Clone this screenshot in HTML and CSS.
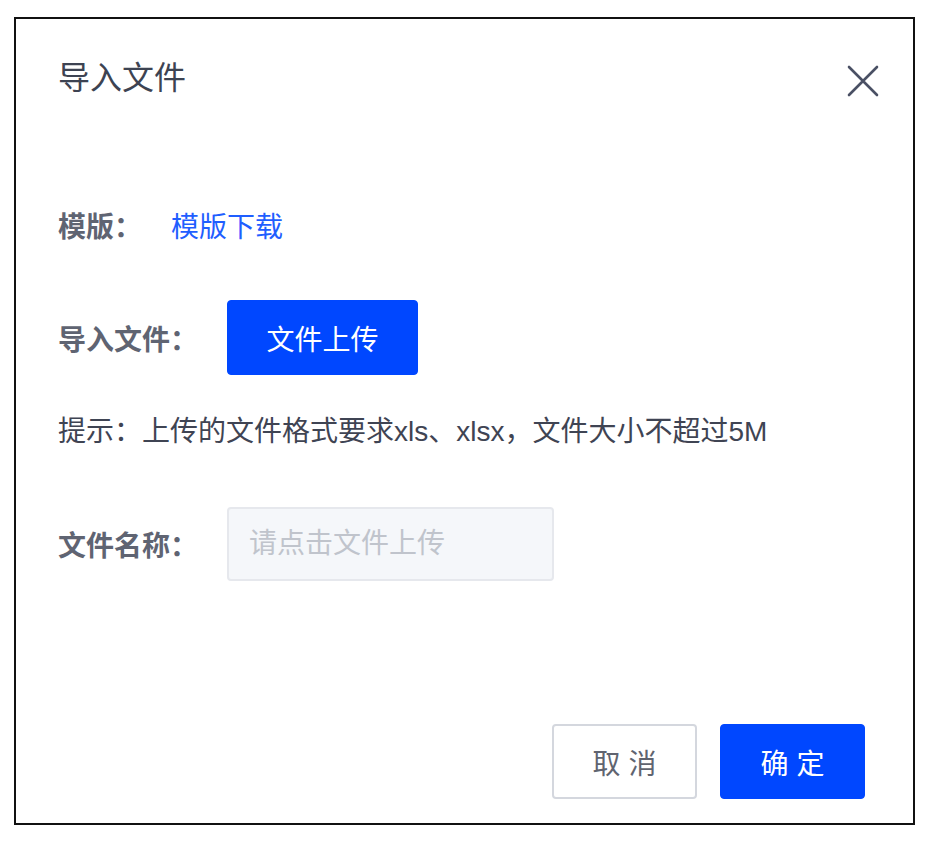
FILE: index.html
```html
<!DOCTYPE html>
<html lang="zh-CN">

<head>
  <meta charset="UTF-8">
  <meta name="viewport" content="width=device-width, initial-scale=1.0">
  <title>导入文件</title>
  <link rel="stylesheet" href="styles.css">
</head>

<body>

  <div class="dialog">
    <div class="dialog-header">
      <span class="dialog-title">导入文件</span>
      <svg class="dialog-close" width="32" height="32" viewBox="0 0 32 32">
        <path d="M2 2 L30 30 M30 2 L2 30" stroke="#4a5064" stroke-width="2.6" stroke-linecap="round" fill="none" />
      </svg>
    </div>

    <div class="dialog-body">
      <div class="row row-template">
        <span class="label">模版：</span>
        <a class="link" href="#">模版下载</a>
      </div>

      <div class="row row-upload">
        <span class="label">导入文件：</span>
        <button class="btn btn-primary btn-upload">文件上传</button>
      </div>

      <div class="hint">提示：上传的文件格式要求xls、xlsx，文件大小不超过5M</div>

      <div class="row row-name">
        <span class="label">文件名称：</span>
        <input class="input" type="text" placeholder="请点击文件上传" disabled>
      </div>
    </div>

    <div class="dialog-footer">
      <button class="btn btn-default">取 消</button>
      <button class="btn btn-primary">确 定</button>
    </div>
  </div>

</body>

</html>
```

FILE: styles.css
```css
body {
  margin: 0;
  padding: 17px 0 0 14px;
  background: #fff;
  font-family: "Liberation Sans", "Noto Sans CJK SC", sans-serif;
}

.dialog {
  width: 897px;
  height: 804px;
  border: 2px solid #111;
  display: flex;
  flex-direction: column;
  background: #fff;
}

.dialog-header {
  display: flex;
  justify-content: space-between;
  align-items: center;
  height: 40px;
  padding: 38px 34px 0 42px;
}

.dialog-title {
  font-size: 32px;
  line-height: 40px;
  color: #3d4352;
  margin-top: 2px;
}

.dialog-close {
  display: block;
  margin-top: 7px;
}

.dialog-body {
  padding: 0 42px;
}

.row {
  display: flex;
  align-items: center;
}

.row-template {
  height: 40px;
  margin-top: 108px;
}

.row-upload {
  height: 75px;
  margin-top: 55px;
}

.row-name {
  height: 74px;
  margin-top: 55px;
}

.label {
  font-size: 28px;
  font-weight: bold;
  color: #5f6472;
  margin-right: 29px;
  white-space: nowrap;
}

.link {
  font-size: 28px;
  color: #1f5eff;
  text-decoration: none;
}

.hint {
  font-size: 28px;
  line-height: 40px;
  color: #3f4453;
  margin-top: 37px;
}

.btn {
  font-family: inherit;
  font-size: 28px;
  height: 75px;
  border-radius: 4px;
  cursor: pointer;
  padding: 0;
}

.btn-primary {
  background: #0047ff;
  border: 1px solid #0047ff;
  color: #fff;
}

.btn-default {
  background: #fff;
  border: 2px solid #d4d7de;
  color: #606470;
}

.btn-upload {
  width: 191px;
}

.input {
  width: 327px;
  height: 74px;
  box-sizing: border-box;
  padding: 0 20px;
  font-family: inherit;
  font-size: 28px;
  background: #f5f7fa;
  border: 2px solid #e6e8ed;
  border-radius: 4px;
  outline: none;
}

.input::placeholder {
  color: #c0c4cc;
}

.dialog-footer {
  margin-top: auto;
  display: flex;
  justify-content: flex-end;
  gap: 23px;
  padding: 0 48px 24px 0;
}

.dialog-footer .btn {
  width: 145px;
}
```
